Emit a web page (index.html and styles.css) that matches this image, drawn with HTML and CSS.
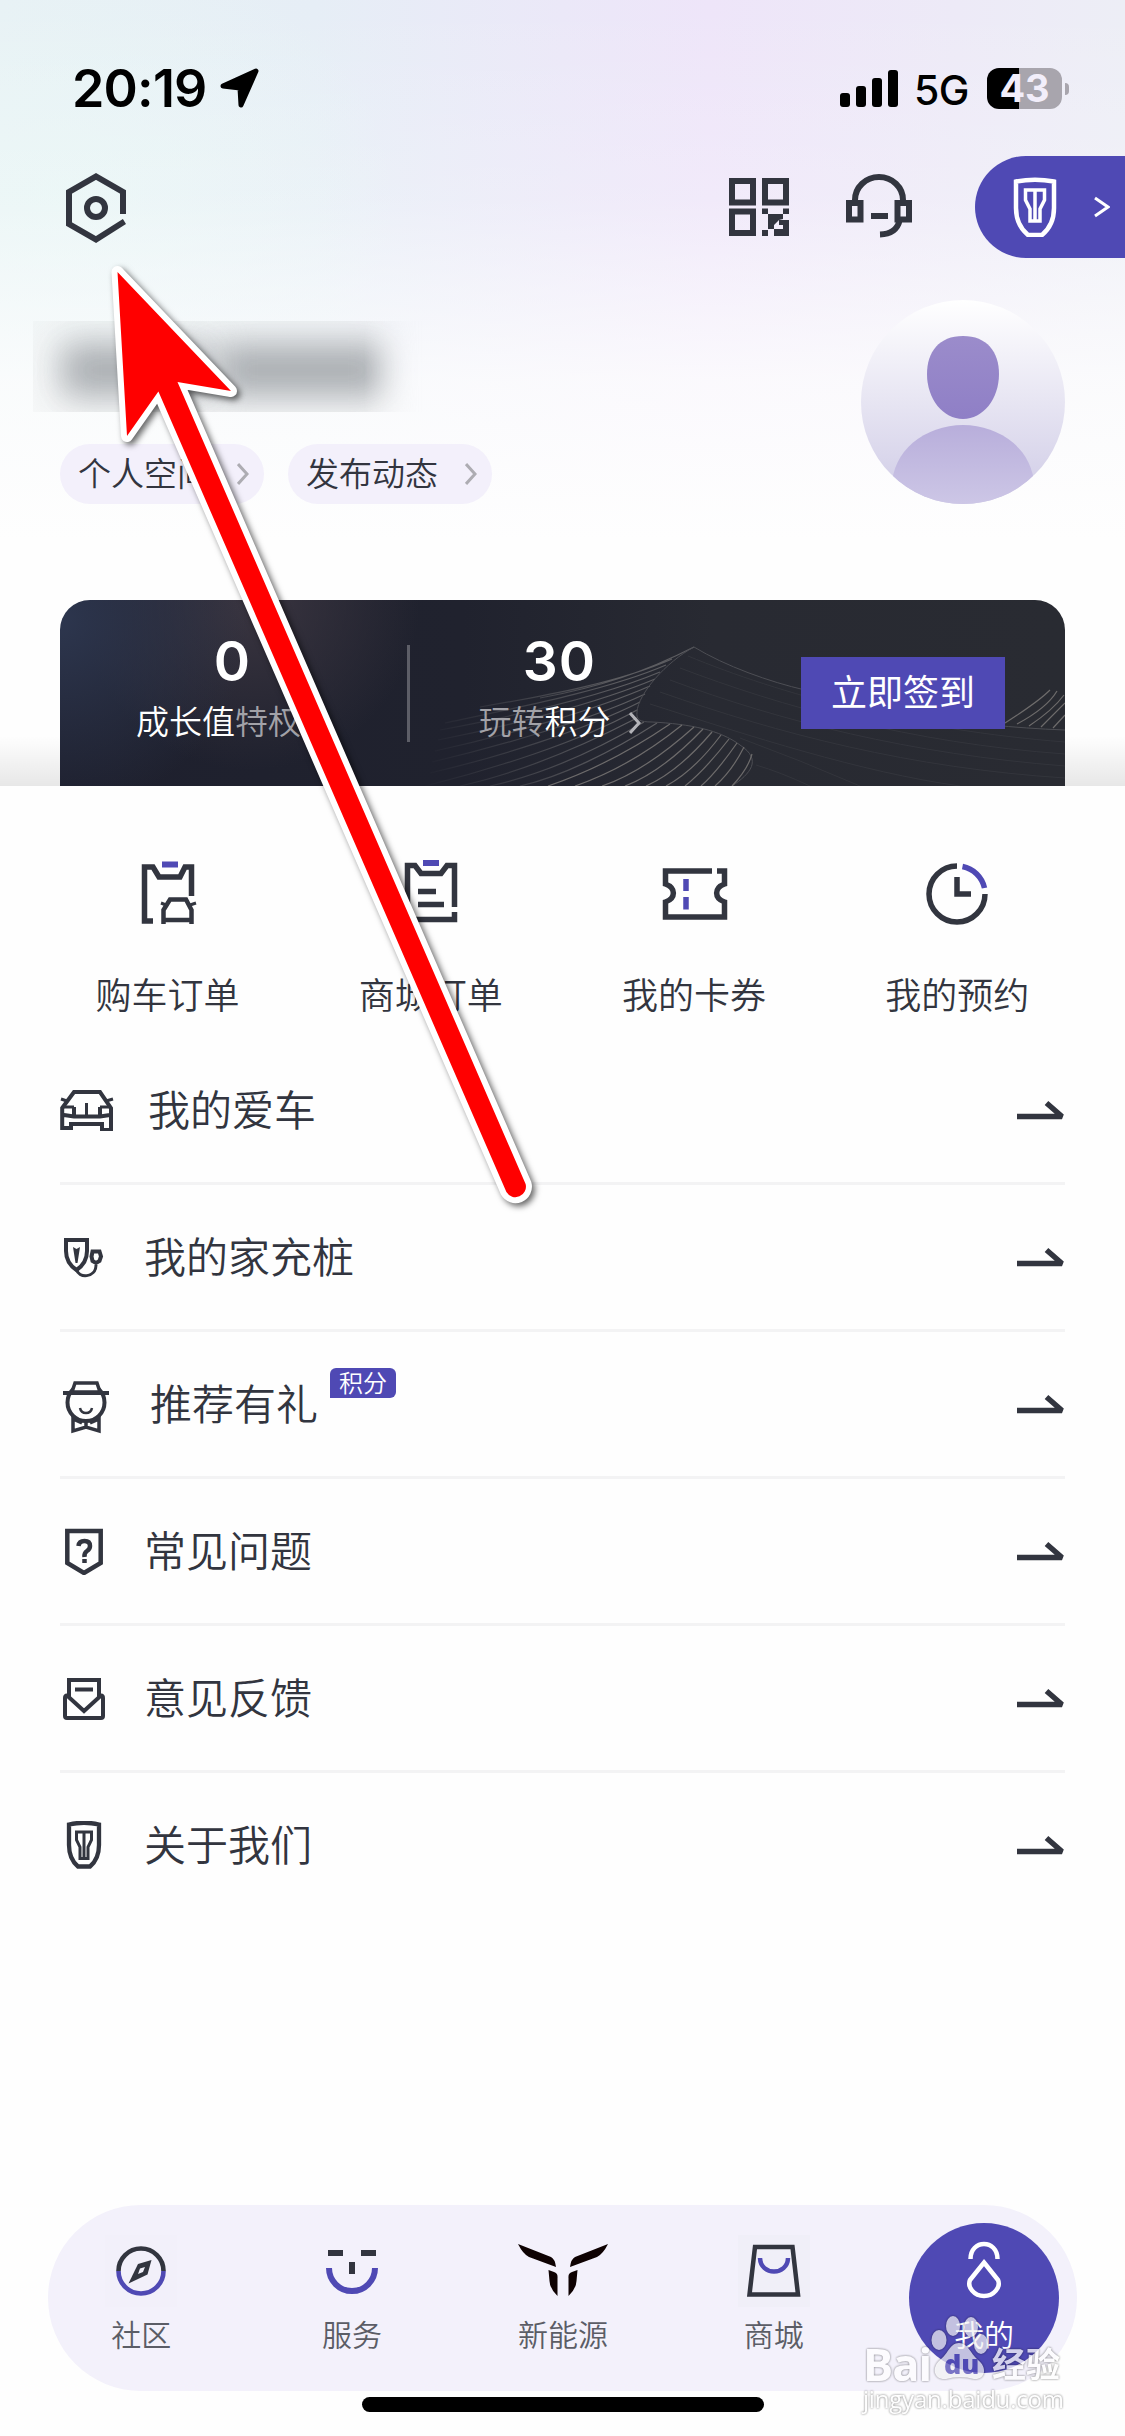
FILE: index.html
```html
<!DOCTYPE html>
<html lang="zh-CN">
<head>
    <meta charset="UTF-8">
    <meta name="viewport" content="width=device-width, initial-scale=1.0">
    <title>我的</title>
    <link rel="stylesheet" href="styles.css">
</head>
<body>
    <svg class="defs" width="0" height="0">
        <symbol id="chevron" viewBox="0 0 12 24"><path d="M1 2L10 12L1 22" fill="none" stroke="currentColor" stroke-width="3"/></symbol>
        <symbol id="arrow" viewBox="0 0 48 20"><path d="M0 16.500H45L29.500 3" fill="none" stroke="currentColor" stroke-width="5.500" stroke-linejoin="bevel"/></symbol>
        <symbol id="shield" viewBox="0 0 44 60">
            <path d="M3 4.500Q22 1 41 4.500V31Q41 48 29 58H15Q3 48 3 31Z" fill="none" stroke="currentColor" stroke-width="4.500"/>
            <path d="M12.500 13H31.500V23L27 32V44H17V32L12.500 23ZM22 13V44" fill="none" stroke="currentColor" stroke-width="3.500"/>
        </symbol>
    </svg>

    <div class="page">
        <header class="hero">
            <div class="status-bar">
                <div class="status-left">
                    <span class="time">20:19</span>
                    <svg width="40" height="40" viewBox="0 0 40 40"><path d="M3 18L36 3L21 37L20 20Z" stroke="#000" stroke-width="5" stroke-linejoin="round"/></svg>
                </div>
                <div class="status-right">
                    <svg width="58" height="37" viewBox="0 0 58 37"><rect y="23" width="10" height="14" rx="3"/><rect x="16" y="16" width="10" height="21" rx="3"/><rect x="32" y="8" width="10" height="29" rx="3"/><rect x="48" width="10" height="37" rx="3"/></svg>
                    <span class="network">5G</span>
                    <div class="battery">43</div>
                </div>
            </div>

            <div class="toolbar">
                <svg class="settings" width="60" height="70" viewBox="0 0 60 70" fill="none" stroke="#32353f" stroke-width="6">
                    <path d="M57 41V19L30 3.500L3 19V51L30 66.500L58.500 48.500"/>
                    <circle cx="30" cy="35" r="9"/>
                </svg>
                <svg width="60" height="58" viewBox="0 0 60 58" fill="#32353f">
                    <path d="M3 3H24V24.500H3ZM36 3H57V24.500H36ZM3 33.500H24V55H3Z" fill="none" stroke="#32353f" stroke-width="6"/>
                    <path d="M33 30.500H39V36H33ZM54 30.500H60V36H54ZM39 36H54V41L50 42L45 47V51H39ZM50 42H60V58H45V51H54V47H50ZM33 52H39V58H33Z"/>
                </svg>
                <svg class="headset" width="66" height="64" viewBox="0 0 66 64" fill="none" stroke="#32353f" stroke-width="6">
                    <path d="M9 27V26A24 23 0 0 1 57 26V27M3 29H14.500V45.500H3ZM51.500 29H63V45.500H51.500ZM25 42H42M53.500 47Q50 60 34 60.500"/>
                </svg>
                <div class="car-pill">
                    <svg width="44" height="60"><use href="#shield"/></svg>
                    <svg width="16" height="22" viewBox="0 0 16 22"><path d="M1 2L14 11L1 20" fill="none" stroke="#fff" stroke-width="3"/></svg>
                </div>
            </div>

            <div class="profile">
                <div>
                    <div class="nickname"><i></i><i></i></div>
                    <div class="links">
                        <a class="link">个人空间<svg width="12" height="24"><use href="#chevron"/></svg></a>
                        <a class="link">发布动态<svg width="12" height="24"><use href="#chevron"/></svg></a>
                    </div>
                </div>
                <svg class="avatar" width="204" height="204" viewBox="0 0 204 204">
                    <defs>
                        <linearGradient id="av" x2="0" y2="1"><stop stop-color="#fff"/><stop offset="1" stop-color="#cfcbe6"/></linearGradient>
                        <linearGradient id="head" x2="0" y2="1"><stop stop-color="#9b8ccb"/><stop offset="1" stop-color="#8f7fc6"/></linearGradient>
                        <linearGradient id="torso" x2="0" y2="1"><stop stop-color="#b8aedb"/><stop offset="1" stop-color="#d8d4ec"/></linearGradient>
                        <clipPath id="round"><circle cx="102" cy="102" r="102"/></clipPath>
                    </defs>
                    <circle cx="102" cy="102" r="102" fill="url(#av)"/>
                    <path d="M102 36C126 36 138 52 138 74C138 99 122 119 102 119S66 99 66 74C66 52 78 36 102 36Z" fill="url(#head)"/>
                    <ellipse cx="102" cy="186" rx="71" ry="61" fill="url(#torso)" clip-path="url(#round)"/>
                </svg>
            </div>

            <section class="card">
                <!-- contour lines behind the points -->
                <svg class="contour" width="1005" height="186" viewBox="0 0 1005 186" fill="none">
                    <defs>
                        <linearGradient id="fade" gradientUnits="userSpaceOnUse" x1="360" x2="560" y1="0" y2="0"><stop stop-color="#53545a" stop-opacity="0"/><stop offset="1" stop-color="#5c5c60"/></linearGradient>
                    </defs>
                    <g stroke="url(#fade)" stroke-width="1.200">
                        <path d="M634 47C585 72 540 87 480 98M612 59C560 82 490 95 420 107M606 65C550 89 470 105 385 123M600 72C545 95 460 115 380 130M595 79C540 102 450 126 378 140M590 86C535 110 445 136 375 151M585 94C530 120 440 146 372 162M580 102C525 130 435 158 370 173M577 110C520 142 430 170 365 186M577 118C515 150 455 174 400 186M584 122C530 154 480 175 430 186M597 123C550 153 500 177 460 186"/>
                    </g>
                    <g stroke="#4d4e54">
                        <path d="M634 47C606 62 578 94 577 112C576 120 580 122 592 122C630 124 660 130 680 145C703 160 690 174 672 186"/>
                        <path d="M634 47C665 66 710 82 745 90C820 110 900 126 1005 130"/>
                    </g>
                    <g stroke="#6d6b6b" stroke-width="1.200">
                        <path d="M610 124Q550 165 488 186M622 125Q570 167 515 186M634 127Q584 172 542 186M643 129Q602 172 565 186M652 132Q618 172 586 186M661 135Q634 171 606 186M669 139Q645 170 625 186M677 143Q656 173 641 186M684 147Q672 171 655 186M692 154Q688 169 672 186"/>
                        <path d="M945 123Q978 102 990 90M957 124Q987 108 997 91M969 126Q993 110 1004 95M981 127L1005 103M993 128L1005 115"/>
                    </g>
                    <path stroke="#33353c" d="M628 56C720 94 850 130 1005 142M620 68C720 106 850 143 1005 154M610 80C720 121 850 154 1005 166M600 92C720 134 850 168 1005 178M590 104C690 136 800 172 900 186M680 138Q740 160 800 186M696 165Q720 172 750 186"/>
                </svg>
                <div class="stat">
                    <strong>0</strong>
                    <p>成长值<em>特权</em><svg width="12" height="24"><use href="#chevron"/></svg></p>
                </div>
                <div class="stat">
                    <strong>30</strong>
                    <p><em>玩转</em>积分<svg width="12" height="24"><use href="#chevron"/></svg></p>
                </div>
                <button class="sign">立即签到</button>
            </section>
        </header>

        <nav class="quick">
            <a>
                <svg width="60" height="66" viewBox="0 0 60 66" fill="none" stroke="#32353f" stroke-width="5.500">
                    <path d="M15 61H6.500V7H15L21 17H42L47 7H53.500V36"/>
                    <path d="M24 4.500H40" stroke="#4f49b4" stroke-width="6"/>
                    <path d="M23 43L28 45M58 43L52 45" stroke-width="3"/>
                    <path d="M25.500 64V50L32 39.500H48L53.500 50V64M25 60H54" stroke-width="4.500"/>
                </svg>
                购车订单
            </a>
            <a>
                <svg width="60" height="66" viewBox="0 0 60 66" fill="none" stroke="#32353f" stroke-width="5.500">
                    <path d="M53.500 47V5.500H46L40 13.500H20L14 5.500H6.500V59.500H53.500V52M17 31.500H35M17 44.500H43"/>
                    <path d="M22 3H38" stroke="#4f49b4" stroke-width="6"/>
                </svg>
                商城订单
            </a>
            <a>
                <svg class="coupon" width="66" height="66" viewBox="0 0 66 66" fill="none" stroke="#32353f" stroke-width="5.500">
                    <path d="M50 11H3.500V24C14 28 14 38 3.500 42V57H62.500V42C52 38 52 28 62.500 24V11H55"/>
                    <path d="M24 19V31M24 37V49.500" stroke="#4f49b4"/>
                </svg>
                我的卡券
            </a>
            <a>
                <svg width="62" height="66" viewBox="0 0 62 66" fill="none" stroke="#32353f" stroke-width="5.500">
                    <path d="M31 6A28 28 0 1 0 59 34M31 17V34H45"/>
                    <path d="M36.500 6.500A28 28 0 0 1 58.500 28" stroke="#4f49b4"/>
                </svg>
                我的预约
            </a>
        </nav>

        <ul class="menu">
            <li>
                <svg width="54" height="42" viewBox="0 0 54 42" fill="none" stroke="#32353f" stroke-width="4.500">
                    <path d="M2.200 41V19L14 3H40L51 19V41H42V35H11V39H2M4 26L14 27.500H40L50 26M14 18V27M40 18V27" stroke-width="4"/>
                    <path d="M1 10L7 12M53 10L46 12M3 18H14M40 18H51M26.500 14V26" stroke-width="3"/>
                </svg>
                <span>我的爱车</span>
                <svg class="go" width="48" height="20"><use href="#arrow"/></svg>
            </li>
            <li>
                <svg width="48" height="48" viewBox="0 0 48 48" fill="none" stroke="#32353f" stroke-width="4">
                    <path d="M6 7H27V18Q27 30 16.500 37Q6 30 6 18Z"/>
                    <path d="M13 14L16.500 16L20 14L17.500 30H15.500Z" fill="#32353f" stroke="none"/>
                    <path d="M16.500 36C18 46 36 45 36 32" stroke-width="3"/>
                    <path d="M32.500 18.500H39.500L41 23.500L39.500 28L36 30L32.500 28L31.500 23.500Z"/>
                </svg>
                <span>我的家充桩</span>
                <svg class="go" width="48" height="20"><use href="#arrow"/></svg>
            </li>
            <li>
                <svg class="referral" width="54" height="54" viewBox="0 -3 54 54" fill="none" stroke="#32353f" stroke-width="4">
                    <path d="M13 36V51L26 47L39 51V36M26 42V47M13 39L22 43M39 39L30 43" stroke-width="3.500"/>
                    <circle cx="26" cy="22.500" r="18.500" fill="#fefefe"/>
                    <path d="M20 28Q21 33 26 33T32 28" stroke-width="2.500"/>
                    <path d="M12 12L15 3H37L40 12Z" fill="#fefefe" stroke-width="3.500"/>
                    <path d="M3 13H49"/>
                </svg>
                <span>推荐有礼</span><b class="badge">积分</b>
                <svg class="go" width="48" height="20"><use href="#arrow"/></svg>
            </li>
            <li>
                <svg width="48" height="48" viewBox="0 0 48 48" fill="none" stroke="#32353f" stroke-width="4.500">
                    <path d="M7.300 4H40.700V36L24 46L7.300 36Z"/>
                    <path d="M18.500 19Q19 14 24.500 14T30 19Q30 22 27 24T24.500 30" stroke-width="4.500"/>
                    <path d="M24.500 32V36"/>
                </svg>
                <span>常见问题</span>
                <svg class="go" width="48" height="20"><use href="#arrow"/></svg>
            </li>
            <li>
                <svg width="48" height="48" viewBox="0 0 48 48" fill="none" stroke="#32353f" stroke-width="4">
                    <path d="M9 24V6H39V24M15 15.500H33"/>
                    <path d="M7 21.500Q5 21.500 5 24V42Q5 44 7 44H41Q43 44 43 42V24Q43 21.500 41 21.500L24 37Z"/>
                </svg>
                <span>意见反馈</span>
                <svg class="go" width="48" height="20"><use href="#arrow"/></svg>
            </li>
            <li>
                <svg class="about" width="48" height="48" viewBox="0 0 48 48" fill="none" stroke="#32353f" stroke-width="4.300">
                    <path d="M9 3.500Q24 0 39 3.500V24Q39 38 30 45.500H18Q9 38 9 24Z"/>
                    <path d="M16.500 11H31.500V19L28 26V37.500H20V26L16.500 19ZM24 11V37" stroke-width="3"/>
                </svg>
                <span>关于我们</span>
                <svg class="go" width="48" height="20"><use href="#arrow"/></svg>
            </li>
        </ul>

        <nav class="tabbar">
            <a>
                <svg class="tile" width="72" height="72" viewBox="0 0 72 72" fill="none" stroke-width="4.600">
                    <path d="M13.500 36A22.500 22.500 0 0 1 58.500 36" stroke="#32353f"/>
                    <path d="M13.500 36A22.500 22.500 0 0 0 58.500 36" stroke="#4f49b4"/>
                    <path d="M46.500 25L42.500 39.500L23.500 48.500L33 29Z" fill="#32353f"/>
                    <path d="M33 39L35 33.500L40 32L38 37Z" fill="#f1f0f9"/>
                </svg>
                社区
            </a>
            <a>
                <svg width="72" height="72" viewBox="0 0 72 72" fill="none" stroke-width="6">
                    <path d="M12 18H27M45 18H60M36 27V39" stroke="#32353f"/>
                    <path d="M13 33A23 23 0 0 0 59 33" stroke="#4f49b4"/>
                </svg>
                服务
            </a>
            <a>
                <svg width="92" height="72" viewBox="0 0 92 72" fill="#0e0202">
                    <path id="wing" d="M1 9L34 22Q38 24 39 32L12 22Q6 19 1 9ZM31.500 35L37 37Q41 38 40.500 43V61Q33 54 32.500 46Z"/>
                    <use href="#wing" transform="matrix(-1 0 0 1 92 0)"/>
                </svg>
                新能源
            </a>
            <a>
                <svg class="tile mall" width="72" height="72" viewBox="0 0 72 72" fill="none" stroke-width="4.500">
                    <path d="M17 12H54.500L60 59.500H11.500Z" stroke="#32353f"/>
                    <path d="M22 23C22.500 41 49.500 41 50 23" stroke="#4f49b4"/>
                </svg>
                商城
            </a>
            <a class="active">
                <svg width="72" height="72" viewBox="0 0 72 72" fill="none" stroke="#fff" stroke-width="4.500">
                    <path d="M22.500 24C22.500 4 49.500 4 49.500 24M36 27.500L50 45C53 52 46 61 36 61S19 52 22 45Z"/>
                </svg>
                我的
            </a>
        </nav>
        <div class="home-indicator"></div>
    </div>

    <svg class="pointer" width="460" height="980" viewBox="0 0 460 980">
        <path d="M17.500 22L131 141L77.500 132L425.600 934A10.500 10.500 0 0 1 406.400 942L58.400 141.500L27 186Z"/>
        <path class="fill" d="M17.500 22L131 141L77.500 132L425.600 934A10.500 10.500 0 0 1 406.400 942L58.400 141.500L27 186Z"/>
    </svg>

    <div class="watermark">
        <div class="brand">
            <span class="bai">Bai</span>
            <span class="paw">
                <svg width="58" height="66" viewBox="0 0 58 66"><ellipse cx="8" cy="25" rx="7.500" ry="10"/><ellipse cx="22" cy="11" rx="7" ry="10"/><ellipse cx="40" cy="12" rx="7" ry="10"/><ellipse cx="50" cy="29" rx="7" ry="10"/><path d="M28 28C37 28 39 38 47 45C57 53 54 65 43 64Q29 60 15 64C3 65 0 53 9 45C17 39 19 28 28 28Z"/></svg>
                <b>du</b>
            </span>
            <span class="jy">经验</span>
        </div>
        <div class="site">jingyan.baidu.com</div>
    </div>
</body>
</html>
```
FILE: styles.css
```css
* {
    box-sizing: border-box;
}

body {
    margin: 0;
    width: 1125px;
    height: 2436px;
    position: relative;
    overflow: hidden;
    background: #fefefe;
    color: #32353f;
    font-family: "Noto Sans CJK SC", sans-serif;
}

svg {
    display: block;
    flex: none;
}

.defs {
    position: absolute;
}

.page {
    height: 2436px;
    display: flex;
    flex-direction: column;
}

/* header */
.hero {
    height: 786px;
    flex: none;
    background:
        linear-gradient(to top, rgba(0, 0, 0, 0.09), rgba(0, 0, 0, 0) 50px),
        linear-gradient(to bottom, rgba(254, 254, 254, 0) 0, rgba(254, 254, 254, 0.2) 200px, rgba(254, 254, 254, 0.8) 380px, #fefefe 540px),
        radial-gradient(ellipse 340px 260px at 60px 200px, rgba(232, 246, 245, 0.9), rgba(232, 246, 245, 0)),
        linear-gradient(to right, #e8f1f5 0, #e6eef6 28%, #ebe8f8 50%, #eee5f9 63%, #edeaf7 85%, #edeef6 100%);
}

.status-bar {
    height: 138px;
    padding: 42px 56px 4px 72px;
    display: flex;
    justify-content: space-between;
    align-items: center;
    font-family: Inter, sans-serif;
    color: #000;
}

.status-left,
.status-right {
    display: flex;
    align-items: center;
}

.time {
    font-size: 52px;
    font-weight: 600;
    letter-spacing: -0.8px;
    width: 148px;
    white-space: nowrap;
}

.network {
    font-size: 41px;
    font-weight: 500;
    margin: 3px 19px 0 16px;
    width: 54px;
    letter-spacing: -0.5px;
}

.battery {
    width: 75px;
    height: 41px;
    border-radius: 12px;
    background: linear-gradient(to right, #000 32px, #a8a5ad 32px);
    color: #f2eefa;
    font-size: 38px;
    font-weight: 700;
    line-height: 41px;
    text-align: center;
    position: relative;
    margin-right: 7px;
}

.battery::after {
    content: "";
    position: absolute;
    left: 78px;
    top: 15px;
    width: 4px;
    height: 12px;
    border-radius: 0 4px 4px 0;
    background: #a8a5ad;
}

.toolbar {
    height: 138px;
    padding: 0 0 0 66px;
    display: flex;
    align-items: center;
    color: #fff;
}

.settings {
    margin: 2px auto 0 0;
}

.headset {
    margin: 0 63px 2px 57px;
}

.car-pill {
    width: 150px;
    height: 102px;
    border-radius: 51px 0 0 51px;
    background: #4f49b4;
    display: flex;
    align-items: center;
    padding: 0 15px 0 38px;
    justify-content: space-between;
}

.profile {
    height: 324px;
    padding: 24px 60px 0 33px;
    display: flex;
    justify-content: space-between;
}

/* masked nickname */
.nickname {
    width: 390px;
    height: 91px;
    margin-top: 21px;
    padding: 22px 30px 0 28px;
    overflow: hidden;
    display: flex;
    gap: 6px;
    -webkit-mask-image: linear-gradient(to right, #000 85%, transparent);
    mask-image: linear-gradient(to right, #000 85%, transparent);
    background: rgba(200, 205, 205, 0.08);
}

.nickname i {
    height: 54px;
    width: 150px;
    background: #aaaeb2;
    filter: blur(17px);
}

.nickname i + i {
    width: 172px;
}

.links {
    display: flex;
    gap: 24px;
    margin: 32px 0 0 27px;
}

.link {
    width: 204px;
    height: 60px;
    border-radius: 30px;
    background: #f3f0fb;
    display: flex;
    align-items: center;
    justify-content: space-between;
    padding: 0 15px 5px 18px;
    font-size: 33px;
    font-weight: 350;
}

.link svg {
    color: #adacb2;
    margin-top: 5px;
}

.card {
    position: relative;
    width: 1005px;
    height: 186px;
    margin: 0 auto;
    border-radius: 30px 30px 0 0;
    overflow: hidden;
    display: grid;
    grid-template-columns: 347px 305px 1fr;
    background:
        radial-gradient(circle at 0 20px, #2d364e 0, rgba(45, 54, 78, 0) 190px),
        radial-gradient(circle at 190px 0, #3a3540 0, rgba(58, 53, 64, 0) 170px),
        linear-gradient(to right, #1e202e 0, #20222e 40%, #282a32 65%, #292b32 100%);
    color: #fff;
}

.contour {
    position: absolute;
    left: 0;
    top: 0;
}

.stat {
    position: relative;
    text-align: center;
    padding-top: 28px;
}

.stat + .stat::before {
    content: "";
    position: absolute;
    left: 0;
    top: 45px;
    width: 3px;
    height: 97px;
    background: #5d5e67;
}

.stat strong {
    display: block;
    height: 66px;
    margin-left: -3px;
    line-height: 66px;
    font-family: Inter, sans-serif;
    font-size: 55px;
    font-weight: 600;
}

.stat + .stat strong {
    margin-left: 0;
    letter-spacing: 1px;
}

.stat p {
    margin: 3px 0 0;
    line-height: 46px;
    font-size: 33px;
    font-weight: 350;
    display: flex;
    justify-content: center;
    align-items: center;
}

.stat em {
    font-style: normal;
    color: #a2a2a8;
}

.stat svg {
    margin: 6px 0 0 18px;
    color: #b3b3b8;
}

.sign {
    position: relative;
    width: 204px;
    height: 72px;
    margin: 57px 0 0 89px;
    padding: 0 0 6px;
    border: none;
    background: #4f49b4;
    color: #fff;
    font: 400 36px "Noto Sans CJK SC", sans-serif;
}

/* shortcuts */
.quick {
    width: 1053px;
    height: 252px;
    flex: none;
    margin: 0 auto;
    padding-top: 74px;
    display: grid;
    grid-template-columns: repeat(4, 1fr);
}

.quick a {
    display: flex;
    flex-direction: column;
    align-items: center;
    gap: 42px;
    font-size: 36px;
    font-weight: 350;
    line-height: 50px;
}

.coupon {
    margin-left: 2px;
}

/* list */
.menu {
    list-style: none;
    margin: 0 60px;
    padding: 0;
    flex: 1;
}

.menu li {
    height: 147px;
    border-bottom: 3px solid #f3f3f4;
    display: flex;
    align-items: center;
    font-size: 42px;
    font-weight: 350;
}

.menu li:last-child {
    border-bottom-color: transparent;
}

.menu span {
    margin: -4px 0 0 36px;
    line-height: 60px;
}

.menu li:first-child span {
    margin-left: 34px;
}

.menu .go {
    margin-left: auto;
}

.referral {
    overflow: visible;
}

.badge {
    width: 66px;
    height: 30px;
    margin: -42px 0 0 12px;
    border-radius: 6px 6px 6px 0;
    background: #4f49b4;
    color: #fff;
    font-size: 24px;
    font-weight: 350;
    line-height: 28px;
    text-align: center;
}

/* bottom tabs */
.tabbar {
    width: 1029px;
    height: 186px;
    flex: none;
    margin: 0 auto;
    border-radius: 93px;
    background: #f3f1fb;
    display: flex;
    justify-content: center;
}

.tabbar a {
    width: 211px;
    margin: 0 -0.1px;
    flex: none;
    display: flex;
    flex-direction: column;
    align-items: center;
    padding-top: 30px;
    font-size: 30px;
    font-weight: 350;
    line-height: 44px;
    gap: 4px;
    color: #5b5d66;
}

.tile {
    background: #f2f0fa;
}

.mall {
    background: #f0eff8;
}

.tabbar .active {
    width: 150px;
    height: 150px;
    margin: 18px 30px 0 30px;
    padding-top: 12px;
    border-radius: 50%;
    background: #4f49b4;
    color: #fff;
}

.home-indicator {
    width: 402px;
    height: 15px;
    flex: none;
    margin: 6px auto 24px;
    border-radius: 8px;
    background: #000;
}

/* red pointer over the page */
.pointer {
    position: absolute;
    left: 100px;
    top: 250px;
    filter: drop-shadow(3px 3px 3px rgba(0, 0, 0, 0.6));
}

.pointer path {
    fill: #fff;
    stroke: #fff;
    stroke-width: 12px;
    stroke-linejoin: round;
}

.pointer .fill {
    fill: #f00;
    stroke: none;
}

.watermark {
    position: absolute;
    left: 863px;
    top: 2315px;
    color: #fff;
    opacity: 0.75;
    filter: drop-shadow(0 0 1px rgba(0, 0, 0, 0.45)) drop-shadow(0 0 1px rgba(0, 0, 0, 0.25));
    font-family: "Open Sans", sans-serif;
}

.brand {
    display: flex;
    align-items: flex-end;
    height: 68px;
    font-weight: 700;
}

.bai {
    width: 68px;
    font-size: 45px;
    line-height: 38px;
    letter-spacing: -1px;
}

.paw {
    position: relative;
    height: 68px;
}

.paw svg {
    fill: rgba(255, 255, 255, 0.9);
}

.paw b {
    position: absolute;
    left: 13px;
    top: 36px;
    font-size: 27px;
    line-height: 26px;
    color: #4f49b4;
}

.jy {
    margin-left: 3px;
    font: 700 34px/40px "Noto Sans CJK SC", sans-serif;
}

.site {
    margin-top: 3px;
    font-size: 24px;
    line-height: 26px;
    letter-spacing: -0.2px;
}
```
